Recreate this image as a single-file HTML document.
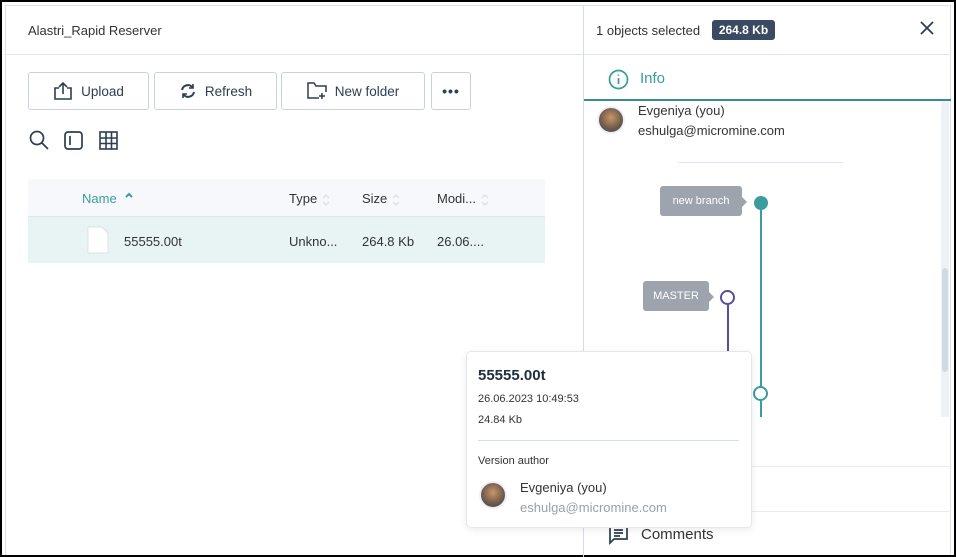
<!DOCTYPE html>
<html><head><style>
*{box-sizing:border-box;margin:0;padding:0}
body{width:956px;height:557px;background:#fff;font-family:"Liberation Sans",sans-serif;color:#333;position:relative;overflow:hidden}
.abs{position:absolute}
.btn{position:absolute;top:72px;height:38px;border:1px solid #c9d2dc;border-radius:3px;font-size:13.5px;color:#2c3e50;display:flex;align-items:center;justify-content:center;gap:8px}
.hdr{font-size:13px;color:#333}
.tag{position:absolute;background:#9ea4ae;color:#fff;font-size:11px;border-radius:3px;display:flex;align-items:center;justify-content:center}
.srt{display:inline-block;vertical-align:middle;margin-left:4px}
</style></head><body>
<div class="abs" style="left:0;top:0;width:956px;height:557px;border:2px solid #000"></div>
<div class="abs" style="left:5px;top:5px;width:946px;height:550px;border:1px solid #dde3ea;border-bottom:none"></div>
<div class="abs" style="left:28px;top:23px;font-size:13px;color:#333">Alastri_Rapid Reserver</div>
<div class="abs" style="left:6px;top:54px;width:578px;height:1px;background:#e1e6ec"></div>
<div class="abs" style="left:583px;top:6px;width:1px;height:551px;background:#d5dce4"></div>

<div class="btn" style="left:28px;width:121px"><svg width="20" height="18" viewBox="0 0 20 18" fill="none" stroke="#2c3e50" stroke-width="1.6"><path d="M6 6H2v11h16V6h-4M10 12V1M6 5l4-4 4 4"/></svg>Upload</div>
<div class="btn" style="left:154px;width:123px"><svg width="18" height="16" viewBox="0 0 18 16" fill="none" stroke="#2c3e50" stroke-width="2"><path d="M3 7a6 6 0 0 1 11-2M15 9a6 6 0 0 1-11 2"/><path d="M14 1v4h-4M4 15v-4h4" stroke-width="1.6"/></svg>Refresh</div>
<div class="btn" style="left:281px;width:144px"><svg width="20" height="18" viewBox="0 0 20 18" fill="none" stroke="#2c3e50" stroke-width="1.5"><path d="M12 16H1V1h6l2 3h10v6M15 11v6M12 14h6"/></svg>New folder</div>
<div class="btn" style="left:431px;width:40px;font-weight:bold;font-size:14px;letter-spacing:1px">•••</div>

<svg class="abs" style="left:29px;top:130px" width="22" height="22" viewBox="0 0 22 22" fill="none" stroke="#2c3e50" stroke-width="1.7"><circle cx="8" cy="8" r="6.5"/><path d="M13 13l6 6"/></svg>
<svg class="abs" style="left:64px;top:131px" width="20" height="20" viewBox="0 0 20 20" fill="none" stroke="#2c3e50" stroke-width="1.7"><rect x="1" y="1" width="17" height="17" rx="3"/><path d="M6 5v9"/></svg>
<svg class="abs" style="left:99px;top:131px" width="20" height="20" viewBox="0 0 20 20" fill="none" stroke="#2c3e50" stroke-width="1.6"><rect x="1" y="1" width="17" height="17"/><path d="M7 1v17M12.5 1v17M1 7h17M1 12.5h17"/></svg>

<div class="abs" style="left:28px;top:179px;width:517px;height:37px;background:#f6f8fb"></div>
<div class="abs" style="left:28px;top:216px;width:517px;height:47px;background:#e8f3f3;border-top:1px solid #dce6ec"></div>
<div class="abs hdr" style="left:82px;top:191px;color:#3a9c9c">Name<svg class="srt" width="10" height="12" viewBox="0 0 10 12" style="margin-left:7px;margin-top:-6px"><path d="M2 6l3-3 3 3" fill="none" stroke="#3a9c9c" stroke-width="2"/></svg></div>
<div class="abs hdr" style="left:289px;top:191px">Type<svg class="srt" width="10" height="14" viewBox="0 0 10 14"><path d="M2 5l3-3 3 3M2 9l3 3 3-3" fill="none" stroke="#dde2e8" stroke-width="1.5"/></svg></div>
<div class="abs hdr" style="left:362px;top:191px">Size<svg class="srt" width="10" height="14" viewBox="0 0 10 14"><path d="M2 5l3-3 3 3M2 9l3 3 3-3" fill="none" stroke="#dde2e8" stroke-width="1.5"/></svg></div>
<div class="abs hdr" style="left:437px;top:191px">Modi...<svg class="srt" width="10" height="14" viewBox="0 0 10 14"><path d="M2 5l3-3 3 3M2 9l3 3 3-3" fill="none" stroke="#dde2e8" stroke-width="1.5"/></svg></div>
<svg class="abs" style="left:87px;top:226px" width="22" height="28" viewBox="0 0 22 28"><path d="M1 1h14l6 6v20H1z" fill="#fff" stroke="#dde2e8"/></svg>
<div class="abs hdr" style="left:124px;top:234px">55555.00t</div>
<div class="abs hdr" style="left:289px;top:234px">Unkno...</div>
<div class="abs hdr" style="left:362px;top:234px">264.8 Kb</div>
<div class="abs hdr" style="left:437px;top:234px">26.06....</div>

<!-- right panel -->
<div class="abs" style="left:596px;top:23px;font-size:13px;color:#333">1 objects selected</div>
<div class="abs" style="left:712px;top:20px;width:63px;height:20px;background:#3b4a63;border-radius:3px;color:#fff;font-size:12px;font-weight:bold;text-align:center;line-height:20px">264.8 Kb</div>
<svg class="abs" style="left:920px;top:21px" width="14" height="14" viewBox="0 0 14 14" stroke="#2c3e50" stroke-width="1.8"><path d="M1 1l12 12M13 1L1 13"/></svg>
<div class="abs" style="left:584px;top:54px;width:367px;height:1px;background:#e1e6ec"></div>
<svg class="abs" style="left:608px;top:69px" width="21" height="21" viewBox="0 0 21 21" fill="none" stroke="#3a9c9c" stroke-width="1.7"><circle cx="10.5" cy="10.5" r="9"/><path d="M10.5 9v6M10.5 5.5v1.2"/></svg>
<div class="abs" style="left:640px;top:70px;font-size:15px;color:#3a9c9c">Info</div>
<div class="abs" style="left:584px;top:99px;width:367px;height:2px;background:#3a8a94"></div>
<div class="abs" style="left:941px;top:101px;width:8px;height:316px;background:#eef1f5"></div>
<div class="abs" style="left:942px;top:268px;width:6px;height:104px;background:#d0dae6;border-radius:3px"></div>
<div class="abs" style="left:597px;top:106px;width:28px;height:28px;border-radius:50%;background:radial-gradient(circle at 50% 40%,#c9946a,#6b5a48 60%,#3c4a5a);border:2px solid #eef"></div>
<div class="abs" style="left:638px;top:103px;font-size:13px;color:#333">Evgeniya (you)</div>
<div class="abs" style="left:638px;top:123px;font-size:13px;color:#333">eshulga@micromine.com</div>
<div class="abs" style="left:678px;top:162px;width:165px;height:1px;background:#dde3ea"></div>

<div class="tag" style="left:660px;top:186px;width:82px;height:30px">new branch</div>
<div class="abs" style="left:742px;top:197px;border:5px solid transparent;border-left:5px solid #9ea4ae;border-right:none"></div>
<div class="abs" style="left:760px;top:203px;width:2px;height:214px;background:#3a9c9c"></div>
<div class="abs" style="left:754px;top:196px;width:14px;height:14px;border-radius:50%;background:#3a9c9c"></div>
<div class="tag" style="left:643px;top:281px;width:66px;height:30px">MASTER</div>
<div class="abs" style="left:709px;top:292px;border:5px solid transparent;border-left:5px solid #9ea4ae;border-right:none"></div>
<div class="abs" style="left:727px;top:304px;width:2px;height:50px;background:#5b4c9c"></div>
<div class="abs" style="left:720px;top:290px;width:15px;height:15px;border-radius:50%;border:2px solid #5b4c9c;background:#fff"></div>
<div class="abs" style="left:753px;top:386px;width:15px;height:15px;border-radius:50%;border:2px solid #3a9c9c;background:#fff"></div>
<div class="abs" style="left:584px;top:466px;width:367px;height:1px;background:#e8ecf0"></div>
<div class="abs" style="left:584px;top:511px;width:367px;height:1px;background:#e8ecf0"></div>
<svg class="abs" style="left:608px;top:524px" width="22" height="22" viewBox="0 0 22 22" fill="none" stroke="#2c3e50" stroke-width="1.7"><path d="M2 2h17v13H6l-4 4z"/><path d="M6 6h9M6 9h9M6 12h6"/></svg>
<div class="abs" style="left:641px;top:526px;font-size:15px;color:#333">Comments</div>

<!-- tooltip -->
<div class="abs" style="left:466px;top:351px;width:286px;height:177px;background:#fff;border:1px solid #e4e8ee;border-radius:5px;box-shadow:0 2px 8px rgba(0,0,0,.08)"></div>
<div class="abs" style="left:478px;top:367px;font-size:15px;font-weight:bold;color:#1f2d3d">55555.00t</div>
<div class="abs" style="left:478px;top:393px;font-size:11px;color:#333">26.06.2023 10:49:53</div>
<div class="abs" style="left:478px;top:414px;font-size:11px;color:#333">24.84 Kb</div>
<div class="abs" style="left:478px;top:440px;width:261px;height:1px;background:#d5dfea"></div>
<div class="abs" style="left:478px;top:455px;font-size:11px;color:#333">Version author</div>
<div class="abs" style="left:479px;top:481px;width:28px;height:28px;border-radius:50%;background:radial-gradient(circle at 50% 40%,#c9946a,#6b5a48 60%,#3c4a5a);border:2px solid #eef"></div>
<div class="abs" style="left:520px;top:480px;font-size:13px;color:#333">Evgeniya (you)</div>
<div class="abs" style="left:520px;top:500px;font-size:13px;color:#9aa0a8">eshulga@micromine.com</div>
</body></html>
